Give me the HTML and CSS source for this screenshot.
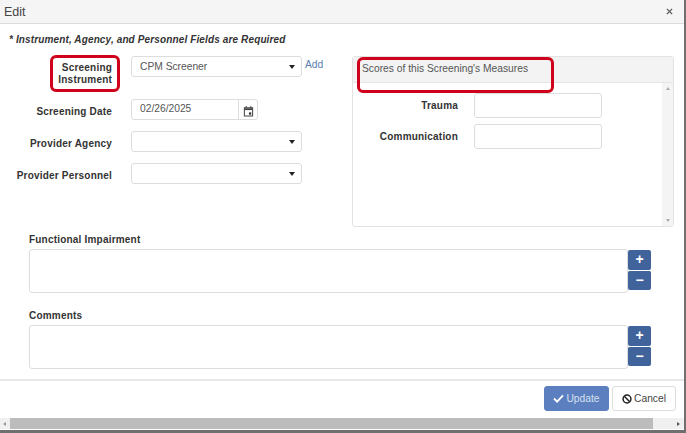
FILE: index.html
```html
<!DOCTYPE html>
<html lang="en">
<head>
<meta charset="utf-8">
<title>Edit</title>
<link rel="stylesheet" href="styles.css">
</head>
<body>
<div class="window">
  <div class="dialog">
    <header class="head">
      <span class="head-title">Edit</span>
      <svg class="close" viewBox="0 0 8 8" width="7" height="7"><path d="M1 1l6 6M7 1l-6 6" stroke="#555" stroke-width="1.4" fill="none"/></svg>
    </header>
    <main class="body">
      <p class="note">* Instrument, Agency, and Personnel Fields are Required</p>
      <div class="columns">
        <div class="fields">
          <div class="row row-first">
            <label class="label label-two">Screening<br>Instrument<span class="mark mark-left"></span></label>
            <div class="select"><span>CPM Screener</span><i class="caret"></i></div>
            <a class="add">Add</a>
          </div>
          <div class="row row-date">
            <label class="label">Screening Date</label>
            <div class="date">
              <span class="date-value">02/26/2025</span>
              <span class="date-btn">
                <svg viewBox="0 0 12 13" width="11" height="12"><path d="M1.500 3h9v9h-9z" fill="none" stroke="#444" stroke-width="1.100"/><path d="M1.500 4.500h9" stroke="#444" stroke-width="2"/><path d="M3.500 1v2M8.500 1v2" stroke="#444" stroke-width="1.100"/><rect x="6.500" y="8" width="2.500" height="2.500" fill="#333"/></svg>
              </span>
            </div>
          </div>
          <div class="row row-agency">
            <label class="label">Provider Agency</label>
            <div class="select"><span></span><i class="caret"></i></div>
          </div>
          <div class="row row-personnel">
            <label class="label">Provider Personnel</label>
            <div class="select"><span></span><i class="caret"></i></div>
          </div>
        </div>
        <section class="panel">
          <div class="panel-head">Scores of this Screening's Measures<span class="mark mark-right"></span></div>
          <div class="panel-body">
            <div class="scores">
              <div class="score"><label class="label score-label">Trauma</label><div class="score-input"></div></div>
              <div class="score"><label class="label score-label">Communication</label><div class="score-input"></div></div>
            </div>
            <div class="vbar"><i class="tri tri-up"></i><i class="tri tri-down"></i></div>
          </div>
        </section>
      </div>
      <div class="text-block block-first">
        <label class="label-left">Functional Impairment</label>
        <div class="text-row">
          <div class="area"></div>
          <div class="steppers"><button class="step">+</button><button class="step">&minus;</button></div>
        </div>
      </div>
      <div class="text-block block-second">
        <label class="label-left">Comments</label>
        <div class="text-row">
          <div class="area"></div>
          <div class="steppers"><button class="step">+</button><button class="step">&minus;</button></div>
        </div>
      </div>
    </main>
    <footer class="foot">
      <button class="btn btn-update">
        <svg viewBox="0 0 12 10" width="11" height="9"><path d="M1 5l3.500 3.500L11 1.500" fill="none" stroke="#fff" stroke-width="2"/></svg>
        Update
      </button>
      <button class="btn btn-cancel">
        <svg viewBox="0 0 12 12" width="10" height="10"><circle cx="6" cy="6" r="4.700" fill="none" stroke="#222" stroke-width="1.800"/><path d="M2.800 2.800l6.400 6.400" stroke="#222" stroke-width="1.800"/></svg>
        Cancel
      </button>
    </footer>
    <div class="hbar">
      <i class="tri tri-left"></i>
      <div class="hthumb"></div>
      <i class="tri tri-right"></i>
    </div>
  </div>
</div>
</body>
</html>
```
FILE: styles.css
```css
* { box-sizing: border-box; }
html, body { margin: 0; height: 100%; overflow: hidden; }
body { background: #fff; font-family: "Liberation Sans", Arial, sans-serif; color: #333; }
.window { width: 686px; height: 433px; background: #6f6f6f; padding: 0 2px 3px 0; }
.dialog { height: 430px; background: #fff; display: flex; flex-direction: column; }
.head { height: 24px; flex: none; background: #f5f5f5; border-bottom: 1px solid #ddd; display: flex; align-items: center; justify-content: space-between; padding: 0 11px 0 4px; }
.head-title { font-size: 12.5px; color: #444; }
.body { flex: 1; padding: 10px 0 0 0; min-height: 0; }
.note { margin: 0 0 0 9px; font-size: 10px; line-height: 12px; font-weight: bold; font-style: italic; letter-spacing: 0.13px; color: #333; }
.columns { display: flex; margin-top: 10px; height: 171px; }
.fields { width: 352px; flex: none; }
.row { display: flex; align-items: flex-start; position: relative; }
.row-date { margin-top: 13px; }
.row-agency { margin-top: 11px; }
.row-personnel { margin-top: 11px; }
.label { width: 112px; flex: none; text-align: right; font-size: 10px; line-height: 12px; font-weight: bold; letter-spacing: 0.2px; color: #333; padding-top: 7px; position: relative; }
.label-two { padding-top: 6px; }
.select { width: 171px; height: 21px; margin-left: 19px; border: 1px solid #ddd; border-radius: 3px; background: #fff; display: flex; align-items: center; justify-content: space-between; padding: 0 6px 0 8px; font-size: 10.25px; color: #555; }
.caret { width: 0; height: 0; border-left: 3px solid transparent; border-right: 3px solid transparent; border-top: 4px solid #222; }
.add { margin-left: 3px; font-size: 10.25px; line-height: 18px; color: #5b7db1; }
.date { width: 127px; height: 21px; margin-left: 19px; display: flex; border: 1px solid #ddd; border-radius: 3px; font-size: 10.25px; color: #555; }
.date-value { flex: 1; padding: 3px 0 0 8px; border-right: 1px solid #ddd; }
.date-btn { width: 18px; display: flex; align-items: center; justify-content: center; padding-top: 3px; }
.mark { position: absolute; border: 3px solid #d0021b; border-radius: 6px; pointer-events: none; }
.mark-left { left: 50px; top: -1px; width: 70px; height: 37px; }
.mark-right { left: 4px; top: 0; width: 197px; height: 36px; }
.panel { width: 322px; height: 171px; flex: none; border: 1px solid #e3e3e3; border-radius: 3px; display: flex; flex-direction: column; }
.panel-head { height: 26px; flex: none; background: #f3f3f3; border-bottom: 1px solid #e6e6e6; padding: 6px 0 0 9px; font-size: 10.25px; line-height: 12px; color: #555; position: relative; }
.panel-body { flex: 1; display: flex; min-height: 0; }
.scores { flex: 1; padding-top: 10px; }
.score { display: flex; align-items: flex-start; margin-bottom: 6px; }
.score-label { width: 105px; padding-top: 6.500px; }
.score-input { width: 128px; height: 25px; margin-left: 16px; border: 1px solid #ddd; border-radius: 3px; }
.vbar { width: 11px; flex: none; background: #f4f4f4; display: flex; flex-direction: column; justify-content: space-between; align-items: center; padding: 4px 0; }
.tri { display: block; width: 0; height: 0; border: 2px solid transparent; }
.tri-up { border-top: 0; border-bottom: 3px solid #aaa; }
.tri-down { border-bottom: 0; border-top: 3px solid #aaa; }
.text-block { padding-left: 29px; }
.block-first { margin-top: 7px; }
.block-second { margin-top: 17px; }
.label-left { display: block; font-size: 10px; line-height: 12px; font-weight: bold; letter-spacing: 0.2px; color: #333; margin-bottom: 3px; }
.text-row { display: flex; align-items: flex-start; }
.area { width: 599px; height: 44px; border: 1px solid #ddd; border-radius: 3px; }
.steppers { display: flex; flex-direction: column; padding-top: 1px; }
.step { width: 23px; height: 20px; padding: 0 0 2px; border: 0; border-radius: 2px; background: #41639c; color: #fff; font-family: "Liberation Sans", Arial, sans-serif; font-size: 14px; line-height: 16px; font-weight: bold; }
.step + .step { border-top: 1px solid #fff; }
.foot { height: 39px; flex: none; margin-top: 10px; border-top: 2px solid #e8e8e8; display: flex; justify-content: flex-end; gap: 3px; padding: 5px 8px 0 0; }
.btn { height: 25px; padding: 0; border-radius: 3px; font-family: "Liberation Sans", Arial, sans-serif; font-size: 10.25px; display: flex; align-items: center; justify-content: center; gap: 2px; }
.btn-update { width: 65px; background: #5b7fbf; border: 1px solid #5b7fbf; color: #d6e0f0; }
.btn-cancel { width: 64px; background: #fff; border: 1px solid #ddd; color: #444; }
.hbar { height: 12px; flex: none; margin-top: auto; background: #f0f0f0; border-bottom: 1px solid #fff; display: flex; align-items: center; position: relative; }
.hthumb { position: absolute; left: 10px; top: 0; bottom: 0; width: 643px; background: #bcbcbc; }
.tri-left { position: absolute; left: 3px; border-left: 0; border-right: 3px solid #999; }
.tri-right { position: absolute; right: 4px; border-right: 0; border-left: 3px solid #555; }
```
